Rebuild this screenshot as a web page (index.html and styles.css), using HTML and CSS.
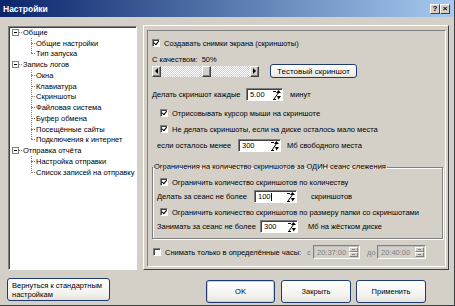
FILE: index.html
```html
<!DOCTYPE html>
<html lang="ru">
<head>
	<meta charset="UTF-8">
	<title>Настройки</title>
	<link rel="stylesheet" href="styles.css">
</head>
<body>
<div class="win">
	<div class="title">
		<span class="name">Настройки</span>
		<span class="tb">?</span><span class="tb">&#215;</span>
	</div>

	<div class="main">
		<div class="tree">
			<div class="node"><span class="box"></span><span class="stub"></span>Общие</div>
			<div class="kids">
				<div class="leaf">Общие настройки</div>
				<div class="leaf">Тип запуска</div>
			</div>
			<div class="node"><span class="box"></span><span class="stub"></span>Запись логов</div>
			<div class="kids">
				<div class="leaf">Окна</div>
				<div class="leaf">Клавиатура</div>
				<div class="leaf">Скриншоты</div>
				<div class="leaf">Файловая система</div>
				<div class="leaf">Буфер обмена</div>
				<div class="leaf">Посещённые сайты</div>
				<div class="leaf">Подключения к интернет</div>
			</div>
			<div class="node"><span class="box"></span><span class="stub"></span>Отправка отчёта</div>
			<div class="kids">
				<div class="leaf">Настройка отправки</div>
				<div class="leaf">Список записей на отправку</div>
			</div>
		</div>

		<div class="page">
			<div class="inner">
				<div class="row"><span class="cb on"></span>Создавать снимки экрана (скриншоты)</div>
				<div class="row r2">С качеством:&nbsp; 50%</div>
				<div class="row r3">
					<div class="sb">
						<span class="arr"><span class="tri-l"></span></span>
						<span class="track"><span class="thumb"></span></span>
						<span class="arr"><span class="tri-r"></span></span>
					</div>
					<button class="btn test">Тестовый скриншот</button>
				</div>
				<div class="row r4">
					<span class="lbl w94">Делать скриншот каждые</span>
					<span class="inp w37"><span class="v">5.00</span><svg class="spin" width="9" height="10" viewBox="0 0 9 10"><path d="M1 1.5h3M2 9L7 2" stroke="#000" fill="none"/><path d="M6.5 0L9 3H4z M5 6h4L6.5 9.5z" fill="#000"/><path d="M1 9.5h3" stroke="#000"/></svg></span>
					<span class="after ml7">минут</span>
				</div>
				<div class="row r5"><span class="cb on"></span>Отрисовывать курсор мыши на скриншоте</div>
				<div class="row r6"><span class="cb on"></span>Не делать скриншоты, если на диске осталось мало места</div>
				<div class="row r7">
					<span class="lbl w81">если осталось менее</span>
					<span class="inp w43"><span class="v">300</span><svg class="spin" width="9" height="10" viewBox="0 0 9 10"><path d="M1 1.5h3M2 9L7 2" stroke="#000" fill="none"/><path d="M6.5 0L9 3H4z M5 6h4L6.5 9.5z" fill="#000"/><path d="M1 9.5h3" stroke="#000"/></svg></span>
					<span class="after ml6">Мб свободного места</span>
				</div>

				<fieldset class="group">
					<legend>Ограничения на количество скриншотов за ОДИН сеанс слежения</legend>
					<div class="row g1"><span class="cb on"></span>Ограничить количество скриншотов по количеству</div>
					<div class="row g2">
						<span class="lbl w97">Делать за сеанс не более</span>
						<span class="inp w43"><span class="v">100<span class="caret"></span></span><svg class="spin" width="9" height="10" viewBox="0 0 9 10"><path d="M1 1.5h3M2 9L7 2" stroke="#000" fill="none"/><path d="M6.5 0L9 3H4z M5 6h4L6.5 9.5z" fill="#000"/><path d="M1 9.5h3" stroke="#000"/></svg></span>
						<span class="after ml14">скриншотов</span>
					</div>
					<div class="row g3"><span class="cb on"></span>Ограничить количество скриншотов по размеру папки со скриншотами</div>
					<div class="row g4">
						<span class="lbl w103">Занимать за сеанс не более</span>
						<span class="inp w38"><span class="v">300</span><svg class="spin" width="9" height="10" viewBox="0 0 9 10"><path d="M1 1.5h3M2 9L7 2" stroke="#000" fill="none"/><path d="M6.5 0L9 3H4z M5 6h4L6.5 9.5z" fill="#000"/><path d="M1 9.5h3" stroke="#000"/></svg></span>
						<span class="after ml10">Мб на жёстком диске</span>
					</div>
				</fieldset>

				<div class="row r9">
					<span class="cb"></span>
					<span class="lbl w142">Снимать только в определённые часы:</span>
					<span class="dis w6">с</span>
					<span class="inp off w47"><span class="v">20:37:00</span><span class="tspin"><span class="up"></span><span class="dn"></span></span></span>
					<span class="dis ml7 w10">до</span>
					<span class="inp off w49"><span class="v">20:40:00</span><span class="tspin"><span class="up"></span><span class="dn"></span></span></span>
				</div>
			</div>
		</div>
	</div>

	<div class="foot">
		<button class="btn reset">Вернуться к стандартным<br>настройкам</button>
		<div class="acts">
			<button class="btn ok">OK</button>
			<button class="btn close">Закрыть</button>
			<button class="btn apply">Применить</button>
		</div>
	</div>
</div>
</body>
</html>
```

FILE: styles.css
```css
body{
	margin:0;
	background:#d4d0c8;
	font:7.5px "Liberation Sans", Arial, sans-serif;
	color:#000;
}
.win{
	width:455px;
	height:306px;
	box-sizing:border-box;
	border-right:1px solid #404040;
	border-bottom:1px solid #404040;
	overflow:hidden;
	display:flex;
	flex-direction:column;
}

/* title bar */
.title{
	height:17px;
	flex:none;
	display:flex;
	align-items:center;
	padding:0 4px 0 3px;
	background:linear-gradient(to right,#0a246a,#a6caf0);
	color:#fff;
	font-weight:bold;
	font-size:8.5px;
}
.title .name{
	flex:1;
}
.tb{
	width:10px;
	height:10px;
	box-sizing:border-box;
	background:#d4d0c8;
	border:1px solid;
	border-color:#fff #404040 #404040 #fff;
	color:#000;
	font-size:8px;
	line-height:8px;
	text-align:center;
}

.main{
	display:flex;
	align-items:flex-start;
	padding-top:8px;
	height:245px;
	flex:none;
}

/* tree */
.tree{
	margin:1px 0 0 8px;
	width:129px;
	height:244px;
	box-sizing:border-box;
	background:#fff;
	border:1px solid;
	border-color:#808080 #fff #fff #808080;
	box-shadow:inset 1px 1px #404040;
	padding-left:3px;
	overflow:hidden;
	white-space:nowrap;
}
.node,.leaf{
	height:10.75px;
	display:flex;
	align-items:center;
}
.box{
	width:7px;
	height:7px;
	box-sizing:border-box;
	border:1px solid #808080;
	background:linear-gradient(#000,#000) center/3px 1px no-repeat #fff;
}
.stub{
	width:3px;
	border-top:1px dotted #808080;
	margin-right:1px;
}
.kids{
	margin-left:19px;
	background:repeating-linear-gradient(to bottom,#808080 0 1px,transparent 1px 2px) no-repeat;
	background-size:1px calc(100% - 5px);
}
.leaf::before{
	content:"";
	width:4px;
	border-top:1px dotted #808080;
	margin-right:1px;
}

/* settings page */
.page{
	margin-left:6px;
	width:306px;
	height:245px;
	box-sizing:border-box;
	border:1px solid;
	border-color:#fff #404040 #404040 #fff;
	padding:4px 2px 2px 3px;
}
.inner{
	height:100%;
	box-sizing:border-box;
	border:1px solid;
	border-color:#808080 #fff #fff #808080;
	padding:6px 0 0 4px;
}
.row{
	display:flex;
	align-items:center;
	height:12px;
	white-space:nowrap;
}
.r2{ margin-top:5px; height:10px; }
.r3{ height:14px; }
.r4{ margin-top:10px; height:13px; }
.r5{ margin-top:6px; padding-left:8px; }
.r6{ margin-top:4px; padding-left:8px; }
.r7{ margin-top:4px; height:13px; padding-left:5px; }
.r9{ margin-top:6px; height:14px; padding-left:1px; }

.lbl{ flex:none; }
.w6{ width:6px; }
.w10{ width:10px; }
.w37{ width:37px; }
.w38{ width:38px; }
.w43{ width:43px; }
.w47{ width:47px; }
.w49{ width:49px; }
.w81{ width:81px; }
.w94{ width:94px; }
.w97{ width:97px; }
.w103{ width:103px; }
.w142{ width:142px; }
.ml6{ margin-left:6px; }
.ml7{ margin-left:7px; }
.ml10{ margin-left:10px; }
.ml14{ margin-left:14px; }

.cb{
	width:8px;
	height:8px;
	box-sizing:border-box;
	flex:none;
	background:#fff;
	border:1px solid;
	border-color:#808080 #fff #fff #808080;
	box-shadow:inset 1px 1px #404040;
	margin-right:4px;
	position:relative;
}
.cb.on::after{
	content:"";
	position:absolute;
	left:1px;
	top:0.5px;
	width:3.5px;
	height:1.8px;
	border-left:1.3px solid #000;
	border-bottom:1.3px solid #000;
	transform:rotate(-48deg);
}

.inp{
	flex:none;
	display:flex;
	align-items:center;
	height:13px;
	box-sizing:border-box;
	background:#fff;
	border:1px solid;
	border-color:#808080 #fff #fff #808080;
	box-shadow:inset 1px 1px #404040;
	padding:0 1px 0 3px;
}
.inp .v{
	flex:1;
	display:flex;
	align-items:center;
}
.caret{
	width:1px;
	height:8px;
	background:#000;
}
.inp.off{
	height:14px;
	background:#d4d0c8;
	color:#808080;
	border-color:#808080 #fff #fff #808080;
	box-shadow:inset 1px 1px #c0c0c0;
	padding-right:1px;
}
.dis{
	color:#808080;
	flex:none;
}
.tspin{
	width:9px;
	height:10px;
	display:flex;
	flex-direction:column;
}
.tspin span{
	flex:1;
	box-sizing:border-box;
	border:1px solid;
	border-color:#fff #808080 #808080 #fff;
	display:flex;
	align-items:center;
	justify-content:center;
}
.tspin .up::after,.tspin .dn::after{
	content:"";
	width:3px;
	height:1px;
	background:#808080;
}

/* scroll slider */
.sb{
	display:flex;
	width:107px;
	height:11px;
	flex:none;
}
.arr,.thumb{
	width:9px;
	height:11px;
	box-sizing:border-box;
	flex:none;
	background:#d4d0c8;
	border:1px solid;
	border-color:#fff #404040 #404040 #fff;
	box-shadow:inset -1px -1px #808080;
	display:flex;
	align-items:center;
	justify-content:center;
}
.track{
	flex:1;
	display:flex;
	background:repeating-conic-gradient(#fff 0 25%,#d4d0c8 0 50%) 0 0/2px 2px;
}
.thumb{
	margin-left:41px;
}
.tri-l{
	border:3px solid transparent;
	border-left:0;
	border-right-color:#000;
}
.tri-r{
	border:3px solid transparent;
	border-right:0;
	border-left-color:#000;
}

/* group */
.group{
	margin:10px 0 0 0;
	padding:0 0 5px 0;
	width:291px;
	box-sizing:border-box;
	border:1px solid #808080;
	box-shadow:inset 1px 1px #fff, 1px 1px #fff;
	min-inline-size:0;
}
.group legend{
	padding:0 1px;
	line-height:10px;
	white-space:nowrap;
}
.g1{ margin-top:4px; padding-left:7px; }
.g2{ margin-top:2px; height:13px; padding-left:4px; }
.g3{ margin-top:3px; padding-left:7px; }
.g4{ margin-top:2px; height:13px; padding-left:4px; }

/* buttons */
.btn{
	font:inherit;
	color:#000;
	box-sizing:border-box;
	border:1px solid #1d3b6e;
	border-radius:3px;
	background:linear-gradient(#fff,#f3f2ee 70%,#e4e2da);
	padding:0;
}
.test{
	margin-left:11px;
	width:87px;
	height:14px;
	font-size:8px;
}
.foot{
	display:flex;
	align-items:flex-start;
	padding-top:8px;
}
.reset{
	margin-left:7px;
	width:103px;
	height:23px;
	text-align:left;
	padding-left:4px;
	line-height:9px;
}
.acts{
	display:flex;
	margin:2px 28px 0 auto;
}
.acts .btn{
	width:70px;
	height:23px;
}
.ok{
	width:69px !important;
	margin-right:6px;
	box-shadow:inset 0 0 0 1px #b9d1f3;
}
.close{
	margin-right:5px;
}
```
